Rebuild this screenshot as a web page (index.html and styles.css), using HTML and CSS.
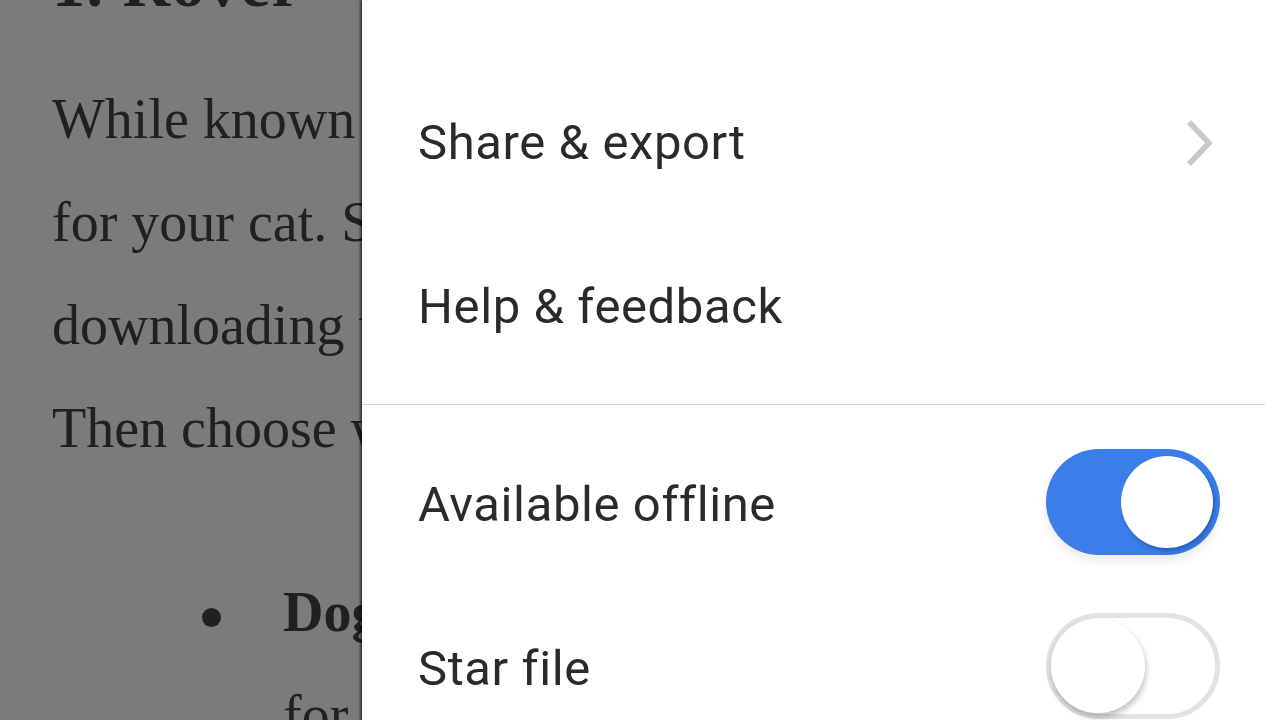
FILE: index.html
```html
<!DOCTYPE html>
<html lang="en">
<head>
<meta charset="utf-8">
<title>Document menu</title>
<link rel="stylesheet" href="styles.css">
</head>
<body>
<div class="screen">
  <article class="doc">
    <h1 class="doc-title">1. Rover</h1>
    <p class="doc-para">While known for finding dog sitters, Rover<br>for your cat. Simply sign up by first<br>downloading the app from the App Store.<br>Then choose what kind of service you need.</p>
    <ul class="doc-list">
      <li class="doc-item"><span><b>Dog boarding:</b> a sitter looks after your pet<br>for the night in their own home.</span></li>
    </ul>
  </article>
  <aside class="menu">
    <div class="menu-section">
      <div class="menu-row">
        <span class="menu-label">Share &amp; export</span>
        <svg class="chevron" width="30" height="48" viewBox="0 0 30 48" aria-hidden="true"><polyline points="5,3 25,24 5,45" fill="none" stroke="#c8c8cc" stroke-width="5.5"/></svg>
      </div>
      <div class="menu-row">
        <span class="menu-label">Help &amp; feedback</span>
      </div>
    </div>
    <div class="menu-divider"></div>
    <div class="menu-section menu-section-toggles">
      <div class="menu-row">
        <span class="menu-label">Available offline</span>
        <span class="toggle toggle-on"><span class="knob"></span></span>
      </div>
      <div class="menu-row">
        <span class="menu-label">Star file</span>
        <span class="toggle toggle-off"><span class="knob"></span></span>
      </div>
    </div>
  </aside>
</div>
</body>
</html>
```

FILE: styles.css
```css
html, body {
  margin: 0;
  padding: 0;
  width: 1280px;
  height: 720px;
  overflow: hidden;
  background: #7b7b7b;
}

.screen {
  display: grid;
  grid-template-columns: 362px 1fr;
  width: 1280px;
  height: 720px;
  overflow: hidden;
}

.doc {
  background: #7b7b7b;
  color: #202020;
  font-family: "Liberation Serif", "DejaVu Serif", serif;
  padding-left: 52px;
  overflow: hidden;
  white-space: nowrap;
  height: 720px;
}

.doc-title {
  font-size: 66px;
  line-height: 60px;
  font-weight: 700;
  margin: -46px 0 0 0;
  letter-spacing: 1.5px;
}

.doc-para {
  font-size: 56px;
  line-height: 103px;
  margin: 54px 0 0 0;
}

.doc-list {
  list-style: none;
  margin: 81px 0 0 0;
  padding: 0 0 0 150px;
  font-size: 56px;
  line-height: 103px;
}

.doc-item {
  display: flex;
  align-items: flex-start;
}

.doc-item::before {
  content: "";
  flex: none;
  width: 19px;
  height: 19px;
  border-radius: 50%;
  background: #202020;
  margin-top: 47px;
  margin-right: 62px;
}

.menu {
  background: #ffffff;
  box-shadow: -2px 0 2px rgba(0, 0, 0, 0.55);
  font-family: Roboto, "Noto Sans", sans-serif;
  color: #2a2a2a;
  padding-top: 61px;
  display: flex;
  flex-direction: column;
  position: relative;
  z-index: 1;
}

.menu-section {
  display: flex;
  flex-direction: column;
}

.menu-section-toggles {
  padding-top: 18px;
}

.menu-row {
  height: 164px;
  display: flex;
  align-items: center;
  justify-content: space-between;
  padding: 0 60px 0 56px;
}

.menu-label {
  font-size: 49px;
  line-height: 60px;
  letter-spacing: 0.6px;
}

.chevron {
  display: block;
  margin-right: 6px;
}

.menu-divider {
  height: 1px;
  background: #d6d6d6;
  margin: 15px 15px 0 0;
}

.toggle {
  width: 174px;
  height: 106px;
  border-radius: 53px;
  box-sizing: border-box;
  display: flex;
  align-items: center;
  flex: none;
  margin-top: -6px;
}

.toggle-on {
  background: #3b7de9;
  justify-content: flex-end;
  padding-right: 7px;
  box-shadow: 0 6px 10px rgba(0, 0, 0, 0.08);
}

.toggle-on .knob {
  width: 92px;
  height: 92px;
  box-shadow: 2px 3px 4px rgba(0, 40, 120, 0.35);
}

.toggle-off {
  background: #ffffff;
  border: 5px solid #e2e2e2;
  justify-content: flex-start;
}

.toggle-off .knob {
  width: 94px;
  height: 94px;
  box-shadow: 1px 4px 6px rgba(0, 0, 0, 0.25);
}

.knob {
  display: block;
  border-radius: 50%;
  background: #ffffff;
}
```
